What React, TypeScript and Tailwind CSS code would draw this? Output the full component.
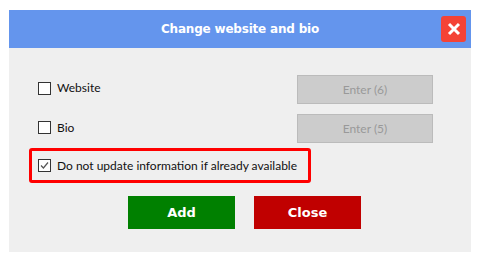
import { useState } from "react"

function Box({ checked, onClick }: { checked: boolean; onClick: () => void }) {
  return (
    <span
      onClick={onClick}
      className="w-[13px] h-[13px] border border-[#333333] bg-white flex items-center justify-center shrink-0 cursor-pointer"
    >
      {checked && (
        <svg width="9" height="9" viewBox="0 0 9 9" fill="none">
          <path d="M1 4.5L3.4 7L8 1.5" stroke="#555555" strokeWidth="1.2" />
        </svg>
      )}
    </span>
  )
}

export default function App() {
  const [website, setWebsite] = useState(false)
  const [bio, setBio] = useState(false)
  const [keep, setKeep] = useState(true)

  return (
    <div className="w-[478px] h-[261px] bg-white pt-[10px] pl-[9px] pr-[7px]" style={{ fontFamily: 'Lato, "Noto Sans", sans-serif' }}>
      {/* Title bar */}
      <div className="relative h-[38px] bg-[#6495ed] flex items-center justify-center">
        <p className="text-white text-[12px] font-bold font-['DejaVu_Sans',sans-serif] tracking-[-0.2px] pb-[1px]">Change website and bio</p>
        <button className="absolute right-[5px] top-[6px] w-[25px] h-[26px] rounded-[3px] bg-[#f44336] flex items-center justify-center">
          <svg width="14" height="14" viewBox="0 0 14 14">
            <path d="M2 2L12 12M12 2L2 12" stroke="white" strokeWidth="3" />
          </svg>
        </button>
      </div>

      {/* Body */}
      <div className="h-[204px] bg-[#efefef] pt-[27px] text-[12px] text-[#111111]">
        <div className="flex items-center justify-between ml-[29px] mr-[38px] h-[29px]">
          <label className="flex items-center gap-[6px] -mt-[3px]">
            <Box checked={website} onClick={() => setWebsite(!website)} />
            <span>Website</span>
          </label>
          <button disabled className="w-[136px] h-[29px] bg-[#cccccc] border border-[#bbbbbb] text-[#999999] text-[12px]">
            Enter (6)
          </button>
        </div>
        <div className="flex items-center justify-between ml-[29px] mr-[38px] h-[29px] mt-[10px]">
          <label className="flex items-center gap-[6px] -mt-[2px]">
            <Box checked={bio} onClick={() => setBio(!bio)} />
            <span>Bio</span>
          </label>
          <button disabled className="w-[136px] h-[29px] bg-[#cccccc] border border-[#bbbbbb] text-[#999999] text-[12px]">
            Enter (5)
          </button>
        </div>
        <div className="ml-[20px] mt-[5px] w-[282px] h-[35px] border-[3px] border-[#ff0000] rounded-[3px] flex items-center pl-[6px]">
          <label className="flex items-center gap-[6px] whitespace-nowrap">
            <Box checked={keep} onClick={() => setKeep(!keep)} />
            <span>Do not update information if already available</span>
          </label>
        </div>
        <div className="flex ml-[119px] mt-[13px] gap-[19px]">
          <button className="w-[107px] h-[33px] bg-[#008000] text-white font-bold text-[13px] font-['DejaVu_Sans',sans-serif]">Add</button>
          <button className="w-[107px] h-[33px] bg-[#c00000] text-white font-bold text-[13px] font-['DejaVu_Sans',sans-serif]">Close</button>
        </div>
      </div>
    </div>
  )
}
